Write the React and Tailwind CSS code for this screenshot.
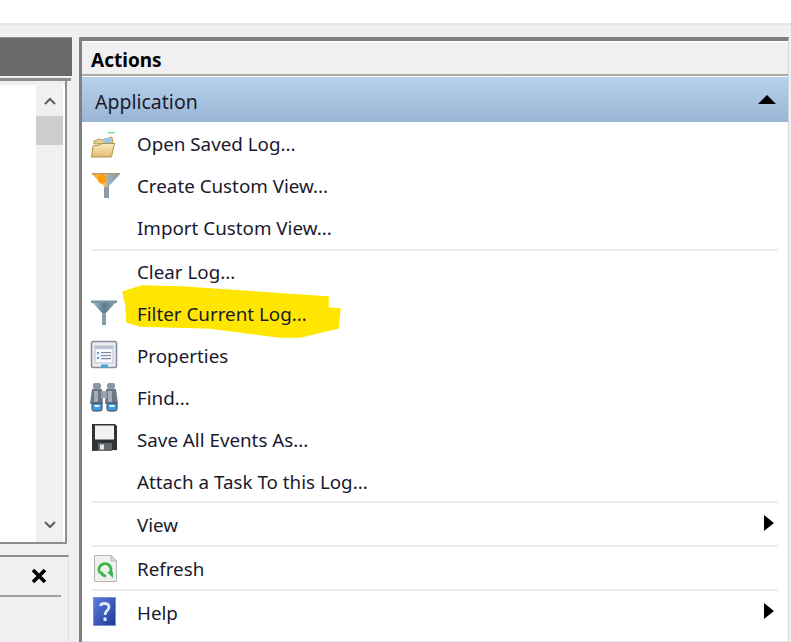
import React from "react";

const font = { fontFamily: '"Noto Sans", "Open Sans", sans-serif' };

const FolderIcon = () => (
  <svg width="32" height="32" viewBox="0 0 32 32" className="blur-[0.4px]">
    <defs>
      <linearGradient id="fold" x1="0" y1="0" x2="0" y2="1">
        <stop offset="0" stopColor="#fdeebc" />
        <stop offset="1" stopColor="#e0bc74" />
      </linearGradient>
    </defs>
    <rect x="19" y="4" width="7" height="1.5" fill="#7fe08a" />
    <path d="M5 16 L5 13 L10 11 L13 12 L23 9 L24 15 Z" fill="#e6cc8c" stroke="#a98a4c" strokeWidth="0.8" />
    <rect x="15" y="10" width="7" height="5" fill="#9cc4e4" />
    <path d="M2.5 29 L4 18 L11 17 L13 15.5 L26 15.5 L24.5 19 L22.5 29 Z" fill="url(#fold)" stroke="#b4924e" strokeWidth="1" />
  </svg>
);

const ColorFunnel = () => (
  <svg width="32" height="32" viewBox="0 0 32 32" className="blur-[0.4px]">
    <defs>
      <linearGradient id="cf" x1="0" y1="0" x2="1" y2="0">
        <stop offset="0" stopColor="#ffa81c" />
        <stop offset="0.45" stopColor="#ffc040" />
        <stop offset="0.55" stopColor="#a4b2be" />
        <stop offset="1" stopColor="#7f96a8" />
      </linearGradient>
    </defs>
    <path d="M3 4 L31 4 L20 16 L20 27 L17 28 L15 26 L15 16 Z" fill="url(#cf)" />
    <rect x="15" y="17" width="5" height="11" fill="#8d9ba8" />
    <circle cx="13" cy="9" r="4.5" fill="#ff9c08" />
    <rect x="3" y="3" width="28" height="1.5" fill="#b89a68" />
  </svg>
);

const GrayFunnel = () => (
  <svg width="32" height="32" viewBox="0 0 32 32" className="blur-[0.4px]">
    <defs>
      <linearGradient id="gf" x1="0" y1="0" x2="1" y2="0">
        <stop offset="0" stopColor="#b4ccd6" />
        <stop offset="0.5" stopColor="#5f7c8e" />
        <stop offset="1" stopColor="#8aa6b6" />
      </linearGradient>
    </defs>
    <path d="M2 3 L28 3 L17 15 L17 26 L15 27 L13 25 L13 15 Z" fill="url(#gf)" />
    <rect x="13" y="15" width="4" height="12" fill="#8a9ba8" />
    <rect x="2" y="2.5" width="26" height="2.5" fill="#7895a6" />
  </svg>
);

const PropsIcon = () => (
  <svg width="32" height="32" viewBox="0 0 32 32" className="blur-[0.4px]">
    <rect x="2.5" y="1.5" width="25" height="26" rx="2" fill="#e8edf2" stroke="#8a8f96" strokeWidth="1.6" />
    <rect x="6" y="6" width="18" height="17" fill="#f6f8fb" stroke="#aeb8c4" strokeWidth="0.8" />
    <rect x="6" y="6" width="18" height="3" fill="#b8c4d2" />
    <rect x="8" y="12" width="2" height="2" fill="#4a9ad8" />
    <rect x="8" y="17" width="2" height="2" fill="#4a9ad8" />
    <rect x="12" y="12" width="10" height="1.2" fill="#7e8c9c" />
    <rect x="12" y="15" width="10" height="1.2" fill="#7e8c9c" />
    <rect x="12" y="18" width="10" height="1.2" fill="#7e8c9c" />
    <rect x="12" y="24.5" width="7" height="3" fill="#3fa8e0" />
  </svg>
);

const FindIcon = () => (
  <svg width="32" height="32" viewBox="0 0 32 32" className="blur-[0.4px]">
    <rect x="4" y="1" width="8" height="6" rx="2" fill="#8b95a3" />
    <rect x="18" y="1" width="8" height="6" rx="2" fill="#8b95a3" />
    <path d="M3 7 L13 7 L14 22 L1 22 Z" fill="#6c7684" />
    <path d="M17 7 L27 7 L29 22 L16 22 Z" fill="#6c7684" />
    <rect x="5" y="9" width="4" height="11" fill="#a4adb8" />
    <rect x="19" y="9" width="4" height="11" fill="#a4adb8" />
    <rect x="12" y="9" width="6" height="7" fill="#9aa4b0" />
    <rect x="3" y="21" width="10" height="8" rx="2" fill="#3a9be0" stroke="#3a4450" strokeWidth="1" />
    <rect x="18" y="21" width="10" height="8" rx="2" fill="#3a9be0" stroke="#3a4450" strokeWidth="1" />
    <rect x="5.5" y="23" width="5" height="2" fill="#e4f4ff" />
    <rect x="20.5" y="23" width="5" height="2" fill="#e4f4ff" />
  </svg>
);

const SaveIcon = () => (
  <svg width="32" height="32" viewBox="0 0 32 32" className="blur-[0.4px]">
    <path d="M3 0 L26 0 L28 2 L28 26 L3 27 Z" fill="#2f3338" />
    <rect x="6" y="1.5" width="19" height="14" fill="#f2f2f2" />
    <rect x="9" y="19" width="14" height="8" fill="#62676e" />
    <rect x="11" y="20.5" width="4" height="5" fill="#e4e4e4" />
  </svg>
);

const RefreshIcon = () => (
  <svg width="32" height="32" viewBox="0 0 32 32" className="blur-[0.4px]">
    <path d="M5.5 2.5 L22 2.5 L27.5 8 L27.5 28.5 L5.5 28.5 Z" fill="#f0f0ee" stroke="#b4b4b2" strokeWidth="1" />
    <path d="M22 2.5 L22 8 L27.5 8 Z" fill="#d8d8d6" stroke="#b4b4b2" strokeWidth="0.8" />
    <path d="M11 20 A6 6 0 1 1 21 20" fill="none" stroke="#3cb54a" strokeWidth="3" />
    <path d="M12 19 A6 6 0 0 0 17 23" fill="none" stroke="#3cb54a" strokeWidth="3" />
    <path d="M18 19 L24 19 L24 25 Z" fill="#3cb54a" />
  </svg>
);

const HelpIcon = () => (
  <svg width="32" height="32" viewBox="0 0 32 32" className="blur-[0.4px]">
    <defs>
      <linearGradient id="hp" x1="0" y1="0" x2="1" y2="1">
        <stop offset="0" stopColor="#5c7ee0" />
        <stop offset="1" stopColor="#1c3a96" />
      </linearGradient>
    </defs>
    <rect x="4.5" y="0.5" width="22" height="28" fill="url(#hp)" stroke="#7c94c8" strokeWidth="1" />
    <path d="M11.5 9 C12 5.5 20 5.5 20 10 C20 13.5 16 13.5 16 18" fill="none" stroke="#e4e8f4" strokeWidth="2.8" />
    <rect x="14.5" y="20.5" width="3" height="3.5" fill="#e4e8f4" />
  </svg>
);

const Sep = ({ up }) => (
  <div className={`h-[2px] shrink-0 ml-[9px] mr-[10px] bg-[#ececec] ${up ? "-mt-[2px]" : ""}`} />
);

function Row({ icon, label, arrow, highlight, low }) {
  return (
    <div className={`relative h-[42px] flex items-center shrink-0 ${low ? "pt-[2px]" : ""}`}>
      {highlight && (
        <svg
          width="222"
          height="56"
          viewBox="0 0 222 56"
          className="absolute left-[39px] top-[-9px]"
        >
          <path
            d="M2 8 L21 2 L60 3 L207 13 L207 24 L219 25 L217 44 L179 53 L159 53 L89 44 L19 42 L6 38 L5 21 Z"
            fill="#ffe600"
            stroke="#ffe600"
            strokeWidth="1.5"
            strokeLinejoin="round"
          />
        </svg>
      )}
      <div className="relative w-[55px] pl-[7px] shrink-0 flex items-center">{icon}</div>
      <span className="relative text-[18.8px] leading-[28px] text-[#1a1a2e]">{label}</span>
      {arrow && (
        <div className="absolute right-[14px] top-[12px] w-0 h-0 border-y-[8px] border-y-transparent border-l-[10px] border-l-black" />
      )}
    </div>
  );
}

export default function App() {
  return (
    <div style={font} className="w-[791px] h-[642px] bg-white overflow-hidden flex flex-col">
      <div className="h-[25px] shrink-0 bg-white border-b-2 border-[#e6e6e6]" />
      <div className="flex-1 min-h-0 bg-[#f0f0f0] pt-[12px] flex">
        {/* Left pane, cut off by the crop */}
        <div className="w-[72px] shrink-0 flex flex-col">
          <div className="h-[39px] shrink-0 bg-[#6a6a6a] border-t border-[#8f8f8f]" />
          <div className="h-[3px] shrink-0 mt-[2px] mr-[1px] bg-[#8d8d8d]" />
          <div className="h-[463px] shrink-0 mr-[5px] pt-[4px] border-r-[2px] border-b-[2px] border-[#8d8d8d] bg-[#f0f0f0]">
            <div className="h-full bg-white flex justify-end pr-[2px]">
              <div className="w-[27px] bg-[#f0f0f0] flex flex-col">
                <div className="h-[31px] shrink-0 flex items-center justify-center">
                  <svg width="14" height="10" viewBox="0 0 14 10">
                    <path d="M2 8 L7 3 L12 8" fill="none" stroke="#606060" strokeWidth="2" />
                  </svg>
                </div>
                <div className="h-[29px] shrink-0 bg-[#cdcdcd]" />
                <div className="flex-1" />
                <div className="h-[34px] shrink-0 flex items-center justify-center">
                  <svg width="14" height="10" viewBox="0 0 14 10">
                    <path d="M2 2 L7 7 L12 2" fill="none" stroke="#606060" strokeWidth="2" />
                  </svg>
                </div>
              </div>
            </div>
          </div>
          <div className="mt-[11px] mr-[3px] border-t-[2px] border-[#8d8d8d] border-r border-r-[#e0e0e0] flex-1 flex flex-col">
            <div className="h-[38px] shrink-0 flex items-center justify-end pr-[21px]">
              <svg width="16" height="16" viewBox="0 0 16 16">
                <path d="M2 2 L14 14 M14 2 L2 14" stroke="#000" strokeWidth="3.6" />
              </svg>
            </div>
            <div className="h-[2px] shrink-0 mr-[7px] bg-[#a0a0a0]" />
          </div>
        </div>

        {/* Actions pane */}
        <div className="ml-[7px] w-[710px] shrink-0 flex flex-col border-l-[3px] border-t-[4px] border-[#808080] border-r border-r-[#d8d8d8] bg-[#f0f0f0]">
          <div className="h-[1px] shrink-0 bg-white" />
          <div className="h-[34px] shrink-0 pl-[9px] pt-[4px] flex items-center border-b-2 border-[#a8a8a8] text-[19px] font-bold text-black">
            Actions
          </div>
          <div className="h-[1px] shrink-0 bg-white" />
          <div className="h-[45px] shrink-0 pl-[13px] pr-[12px] flex items-center justify-between bg-gradient-to-b from-[#b8d2ec] to-[#9ab5d4] text-[19.5px] text-[#1a1a2e]">
            <span className="pt-[4px]">Application</span>
            <div className="w-0 h-0 border-x-[9px] border-x-transparent border-b-[9px] border-b-black" />
          </div>
          <div className="flex-1 bg-white pt-[1px] flex flex-col">
            <Row icon={<FolderIcon />} label="Open Saved Log..." />
            <Row icon={<ColorFunnel />} label="Create Custom View..." />
            <Row label="Import Custom View..." />
            <Sep />
            <Row label="Clear Log..." />
            <Row icon={<GrayFunnel />} label="Filter Current Log..." highlight />
            <Row icon={<PropsIcon />} label="Properties" />
            <Row icon={<FindIcon />} label="Find..." />
            <Row icon={<SaveIcon />} label="Save All Events As..." />
            <Row label="Attach a Task To this Log..." />
            <Sep up />
            <Row label="View" arrow low />
            <Sep />
            <Row icon={<RefreshIcon />} label="Refresh" low />
            <Sep />
            <Row icon={<HelpIcon />} label="Help" arrow low />
            <div className="mt-auto h-[1px] shrink-0 bg-[#dce6f2]" />
          </div>
        </div>
      </div>
    </div>
  );
}
